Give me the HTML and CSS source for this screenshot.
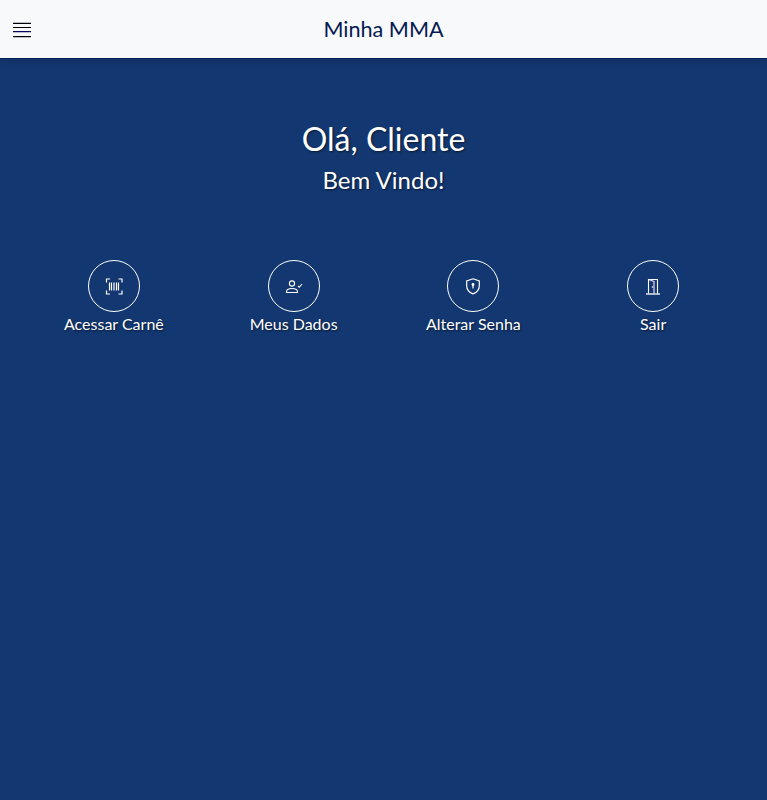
FILE: index.html
```html
<!DOCTYPE html>
<html lang="pt-BR">
<head>
<meta charset="UTF-8">
<meta name="viewport" content="width=device-width, initial-scale=1.0">
<title>Minha MMA</title>
<link rel="stylesheet" href="styles.css">
</head>
<body>

<header class="topbar">
  <button class="menu-btn" aria-label="Menu">
    <svg viewBox="0 0 18 16" width="18" height="16" shape-rendering="crispEdges">
      <path fill="#b9bcc6" d="M0 0h18v1H0zM0 10h18v1H0zM0 15h18v1H0z"/>
      <path fill="#000" d="M0 1h18v1H0zM0 5h18v1H0zM0 14h18v1H0z"/>
      <path fill="#04045c" d="M0 9h18v1H0z"/>
    </svg>
  </button>
  <h1 class="topbar-title">Minha MMA</h1>
</header>

<main class="content">
  <h2 class="hello">Olá, Cliente</h2>
  <p class="welcome">Bem Vindo!</p>

  <nav class="actions">
    <a class="action" href="#">
      <span class="action-circle">
        <svg viewBox="0 0 18 18" width="18" height="18" fill="none" stroke="#fff" stroke-width="1.200">
          <path d="M1.500 5.500V2H5M13.500 2H17V5.500M17 13.500V17H13.500M5 17H1.500V13.500"/>
          <path d="M4.500 5.500v8M6.500 5.500v8M9 5.500v8M11.500 5.500v8M13.500 5.500v8" stroke-width="1.200"/>
        </svg>
      </span>
      <span class="action-label">Acessar Carnê</span>
    </a>
    <a class="action" href="#">
      <span class="action-circle">
        <svg viewBox="0 0 18 18" width="18" height="18" fill="none" stroke="#fff" stroke-width="1.100">
          <circle cx="7" cy="6.500" r="2.600"/>
          <path d="M1.500 15.500v-.8c0-2 2.500-3.200 5.500-3.200s5.500 1.200 5.500 3.200v.8z"/>
          <path d="M13 9l1.300 1.300 2.700-3.300"/>
        </svg>
      </span>
      <span class="action-label">Meus Dados</span>
    </a>
    <a class="action" href="#">
      <span class="action-circle">
        <svg viewBox="0 0 18 18" width="18" height="18" fill="none" stroke="#fff" stroke-width="1.200">
          <path d="M9 1.800l6.300 2.100v5c0 3.700-2.700 6.400-6.300 8-3.600-1.600-6.300-4.300-6.300-8v-5z"/>
          <circle cx="9" cy="7.500" r="1.400" fill="#fff" stroke="none"/>
          <path d="M9 8v3.600" stroke-width="1.300"/>
        </svg>
      </span>
      <span class="action-label">Alterar Senha</span>
    </a>
    <a class="action" href="#">
      <span class="action-circle">
        <svg viewBox="0 0 18 18" width="18" height="18" fill="none" stroke="#fff" stroke-width="1.100">
          <path d="M4.500 16.500V2.500H13.500V16.500"/>
          <path d="M5 2.700l5 1.800V16.500" stroke="#e6d6f2" stroke-width="1.200"/>
          <path d="M2 17h14" stroke-width="1.300"/>
          <circle cx="8.500" cy="10" r=".8" fill="#fff" stroke="none"/>
        </svg>
      </span>
      <span class="action-label">Sair</span>
    </a>
  </nav>
</main>

</body>
</html>
```

FILE: styles.css
```css
* {
  box-sizing: border-box;
}

html, body {
  height: 100%;
}

body {
  margin: 0;
  display: flex;
  flex-direction: column;
  font-family: Lato, "Liberation Sans", sans-serif;
  background-color: #133770;
  overflow: hidden;
}

.topbar {
  position: relative;
  flex: none;
  height: 59px;
  display: flex;
  align-items: center;
  justify-content: center;
  background-color: #f8f9fb;
  border-bottom: 1px solid #0a1f55;
  box-shadow: 0 3px 8px rgba(0, 0, 0, 0.12);
}

.topbar-title {
  margin: 0;
  font-size: 21.600px;
  font-weight: 400;
  color: #061a52;
}

.menu-btn {
  position: absolute;
  left: 13px;
  top: 22px;
  width: 18px;
  height: 16px;
  padding: 0;
  border: none;
  background: none;
  display: block;
}

.menu-btn svg {
  display: block;
}

.content {
  flex: 1;
  padding-top: 60px;
  text-align: center;
  color: #fff;
  text-shadow: 1px 1px 2px rgba(0, 0, 0, 0.55);
}

.hello {
  margin: 0;
  font-size: 32px;
  line-height: 40px;
  font-weight: 400;
}

.welcome {
  margin: 3px 0 0;
  font-size: 24px;
  line-height: 36px;
}

.actions {
  margin-top: 62px;
  padding: 0 24px;
  display: grid;
  grid-template-columns: repeat(4, 1fr);
}

.action {
  display: flex;
  flex-direction: column;
  align-items: center;
  color: #fff;
  text-decoration: none;
}

.action-circle {
  width: 52px;
  height: 52px;
  display: flex;
  align-items: center;
  justify-content: center;
  border: 1px solid #fff;
  border-radius: 50%;
}

.action-label {
  margin-top: 2px;
  font-size: 16px;
  line-height: 20px;
}
```
